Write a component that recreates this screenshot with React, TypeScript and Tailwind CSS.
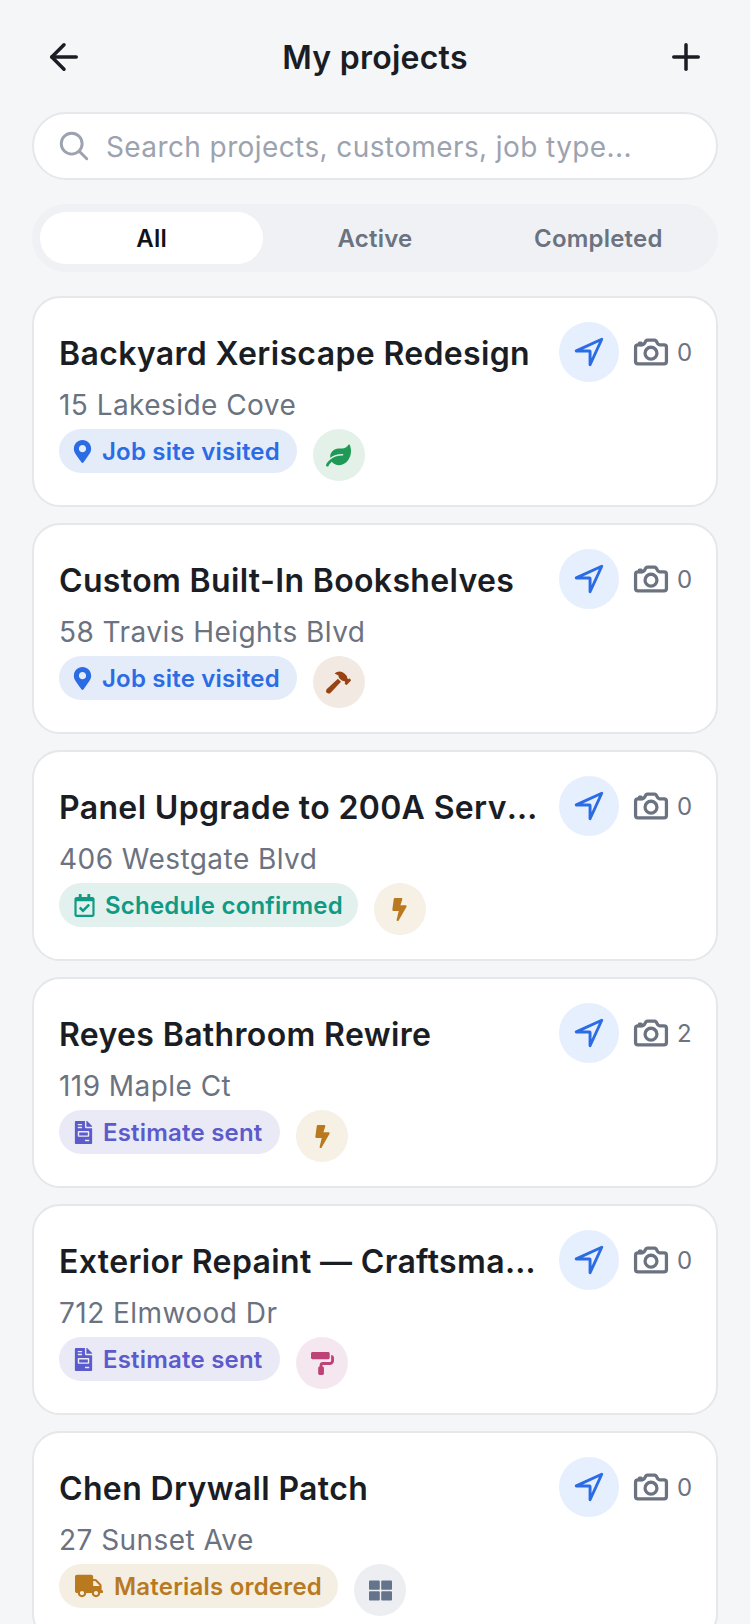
import React from "react";
import { ArrowLeft, Plus } from "lucide-react";
import { IoSearchOutline, IoNavigateOutline, IoCameraOutline } from "react-icons/io5";
import { FaMapMarkerAlt, FaRegCalendarCheck, FaFileInvoice, FaTruck, FaLeaf, FaHammer, FaBolt, FaPaintRoller, FaThLarge } from "react-icons/fa";

type Stat = { Icon: any; label: string; pill: string; text: string; iconClass: string; pad: string };

const visited: Stat = { Icon: FaMapMarkerAlt, label: "Job site visited", pill: "bg-[#e4ecfa]", text: "text-[#2b6be4]", iconClass: "w-[23px] h-[23px]", pad: "pl-[12px] pr-[17px] gap-[8px]" };
const confirmed: Stat = { Icon: FaRegCalendarCheck, label: "Schedule confirmed", pill: "bg-[#e2f1ee]", text: "text-[#0f9a84]", iconClass: "w-[23px] h-[23px]", pad: "pl-[14px] pr-[15px] gap-[9px]" };
const estimate: Stat = { Icon: FaFileInvoice, label: "Estimate sent", pill: "bg-[#eaeaf7]", text: "text-[#5b5bcb]", iconClass: "w-[23px] h-[23px]", pad: "pl-[13px] pr-[18px] gap-[8px]" };
const materials: Stat = { Icon: FaTruck, label: "Materials ordered", pill: "bg-[#f5eee3]", text: "text-[#b97a1f]", iconClass: "w-[28px] h-[28px]", pad: "pl-[16px] pr-[16px] gap-[11px]" };

const leaf = { Icon: FaLeaf, bg: "bg-[#e4f1e9]", color: "text-[#1f9a56]", size: "w-[25px] h-[25px]" };
const hammer = { Icon: FaHammer, bg: "bg-[#f2e9e2]", color: "text-[#974312]", size: "w-[25px] h-[25px]" };
const bolt = { Icon: FaBolt, bg: "bg-[#f6f0e5]", color: "text-[#b97a1f]", size: "w-[23px] h-[23px]" };
const roller = { Icon: FaPaintRoller, bg: "bg-[#f5e7ef]", color: "text-[#bd4278]", size: "w-[23px] h-[23px]" };
const grid = { Icon: FaThLarge, bg: "bg-[#edeef2]", color: "text-[#64748b]", size: "w-[23px] h-[23px]" };

const projects = [
  { title: "Backyard Xeriscape Redesign", addr: "15 Lakeside Cove", status: visited, trade: leaf, n: 0 },
  { title: "Custom Built-In Bookshelves", addr: "58 Travis Heights Blvd", status: visited, trade: hammer, n: 0 },
  { title: "Panel Upgrade to 200A Service", addr: "406 Westgate Blvd", status: confirmed, trade: bolt, n: 0 },
  { title: "Reyes Bathroom Rewire", addr: "119 Maple Ct", status: estimate, trade: bolt, n: 2 },
  { title: "Exterior Repaint — Craftsman Home", addr: "712 Elmwood Dr", status: estimate, trade: roller, n: 0 },
  { title: "Chen Drywall Patch", addr: "27 Sunset Ave", status: materials, trade: grid, n: 0 },
];

function Card({ p }: { p: (typeof projects)[number] }) {
  const S = p.status;
  const T = p.trade;
  return (
    <div className="shrink-0 h-[211px] rounded-[28px] border-2 border-[#e5e7eb] bg-white pl-[25px] pr-[25px] pt-[24px] flex items-start">
      <div className="flex-1 min-w-0 pt-[11px]">
        <div className="truncate text-[32px] leading-[42px] font-semibold text-[#1a1d23] tracking-[0.35px]">{p.title}</div>
        <div className="mt-[13px] truncate text-[28px] leading-[34px] text-[#6b7280] tracking-[0.45px]">{p.addr}</div>
        <div className="mt-[7px] flex items-start gap-[16px]">
          <div className={`h-[44px] rounded-full flex items-center ${S.pad} ${S.pill} ${S.text}`}>
            <S.Icon className={S.iconClass} />
            <span className="pt-[1px] text-[24px] leading-[32px] font-semibold tracking-[0.2px]">{S.label}</span>
          </div>
          <div className={`w-[52px] h-[52px] rounded-full flex items-center justify-center ${T.bg} ${T.color}`}>
            <T.Icon className={T.size} />
          </div>
        </div>
      </div>
      <div className="shrink-0 flex items-center ml-[18px]">
        <div className="w-[60px] h-[60px] rounded-full bg-[#e6effd] flex items-center justify-center text-[#2b6be4]">
          <IoNavigateOutline className="w-[34px] h-[34px] [&_*]:stroke-[44]" />
        </div>
        <div className="ml-[13px] flex items-center gap-[7px] text-[#6b7280]">
          <IoCameraOutline className="w-[38px] h-[38px] [&_*]:stroke-[44]" />
          <span className="text-[24px] leading-[30px] w-[14px] mt-[1px]">{p.n}</span>
        </div>
      </div>
    </div>
  );
}

export default function App() {
  return (
    <div className="h-[1624px] overflow-hidden bg-[#f5f6f8] font-['Inter',sans-serif] px-[32px] flex flex-col">
      <div className="shrink-0 mt-[34px] h-[46px] flex items-center justify-between px-[11px] text-[#1a1d23]">
        <ArrowLeft className="w-[42px] h-[42px]" strokeWidth={2} />
        <div className="mt-[2px] text-[32px] leading-[42px] font-semibold tracking-[0.25px]">My projects</div>
        <Plus className="w-[42px] h-[42px]" strokeWidth={2} />
      </div>
      <div className="shrink-0 mt-[32px] h-[68px] rounded-full border-2 border-[#e5e7eb] bg-white flex items-center pl-[23px] gap-[15px]">
        <IoSearchOutline className="w-[34px] h-[34px] text-[#9ca3af] [&_*]:stroke-[44]" />
        <span className="pt-[2px] text-[28px] leading-[38px] text-[#9ca3af] tracking-[0.4px]">Search projects, customers, job type...</span>
      </div>
      <div className="shrink-0 mt-[24px] h-[68px] rounded-full bg-[#eff1f5] p-[8px] grid grid-cols-3 text-[24px] font-semibold tracking-[0.2px]">
        <div className="pt-[2px] rounded-full bg-white flex items-center justify-center text-[#111318]">All</div>
        <div className="pt-[2px] flex items-center justify-center text-[#6b7280]">Active</div>
        <div className="pt-[2px] flex items-center justify-center text-[#6b7280]">Completed</div>
      </div>
      <div className="mt-[24px] flex flex-col gap-[16px]">
        {projects.map((p) => (
          <Card key={p.title} p={p} />
        ))}
      </div>
    </div>
  );
}
